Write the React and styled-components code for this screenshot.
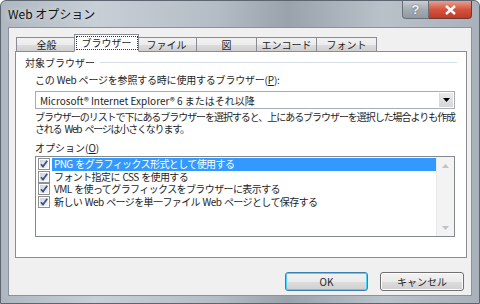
import React, { useState } from "react";
import styled, { createGlobalStyle } from "styled-components";

const tabs = ["全般", "ブラウザー", "ファイル", "図", "エンコード", "フォント"];

const options = [
  "PNG をグラフィックス形式として使用する",
  "フォント指定に CSS を使用する",
  "VML を使ってグラフィックスをブラウザーに表示する",
  "新しい Web ページを単一ファイル Web ページとして保存する",
];

const GlobalStyle = createGlobalStyle`
  body {
    margin: 0;
    font-family: "Noto Sans CJK JP", "Noto Sans", sans-serif;
    font-size: 10px;
    color: #1e1e1e;
  }
`;

const CheckMark = () => (
  <svg width="12" height="12" viewBox="0 0 12 12">
    <defs>
      <linearGradient id="cbg" x1="0" y1="0" x2="1" y2="1">
        <stop offset="0" stopColor="#cfd3da" />
        <stop offset="1" stopColor="#f6f6f6" />
      </linearGradient>
    </defs>
    <rect x="0.5" y="0.5" width="11" height="11" fill="#fff" stroke="#8e8f8f" />
    <rect x="2" y="2" width="8" height="8" fill="url(#cbg)" />
    <path d="M3 6.2 L5 8.6 L9.2 2.8" fill="none" stroke="#3b4f8c" strokeWidth="1.7" />
  </svg>
);

const App = () => {
  const [active, setActive] = useState(1);
  const [selected, setSelected] = useState(0);

  return (
    <>
      <GlobalStyle />
      <Window>
        <TitleBar>
          <Title>Web オプション</Title>
          <Caption>
            <HelpButton>?</HelpButton>
            <CloseButton>
              <svg width="11" height="10" viewBox="0 0 11 10">
                <path d="M1 1 L10 9 M10 1 L1 9" stroke="#fff" strokeWidth="2.4" />
              </svg>
            </CloseButton>
          </Caption>
        </TitleBar>
        <Client>
          <TabStrip>
            {tabs.map((t, i) => (
              <Tab key={t} $active={i === active} onClick={() => setActive(i)}>
                {i === active ? <Focus>{t}</Focus> : t}
              </Tab>
            ))}
          </TabStrip>
          <Panel>
            <GroupHead>
              <span>対象ブラウザー</span>
              <GroupLine />
            </GroupHead>
            <Indented>
              <Label>
                この Web ページを参照する時に使用するブラウザー(<U>P</U>):
              </Label>
              <Select>
                <SelectText>Microsoft® Internet Explorer® 6 またはそれ以降</SelectText>
                <DropButton>
                  <svg width="7" height="4" viewBox="0 0 7 4">
                    <path d="M0 0 H7 L3.5 4 Z" fill="#000" />
                  </svg>
                </DropButton>
              </Select>
              <Description>
                <Line $spacing={-1.05}>
                  ブラウザーのリストで下にあるブラウザーを選択すると、上にあるブラウザーを選択した場合よりも作成
                </Line>
                <Line $spacing={-1.2}>される Web ページは小さくなります。</Line>
              </Description>
              <OptionsLabel>
                オプション(<U>O</U>)
              </OptionsLabel>
              <ListBox>
                <Items>
                  {options.map((o, i) => (
                    <Item key={o} onClick={() => setSelected(i)}>
                      <CheckMark />
                      <ItemText $selected={i === selected}>{o}</ItemText>
                    </Item>
                  ))}
                </Items>
                <ScrollBar>
                  <Arrow>
                    <svg width="7" height="4" viewBox="0 0 7 4">
                      <path d="M0 4 H7 L3.5 0 Z" fill="#c2c2c2" />
                    </svg>
                  </Arrow>
                  <Arrow>
                    <svg width="7" height="4" viewBox="0 0 7 4">
                      <path d="M0 0 H7 L3.5 4 Z" fill="#c2c2c2" />
                    </svg>
                  </Arrow>
                </ScrollBar>
              </ListBox>
            </Indented>
          </Panel>
          <Footer>
            <Button $default>OK</Button>
            <Button>キャンセル</Button>
          </Footer>
        </Client>
      </Window>
    </>
  );
};

export default App;

const Window = styled.div`
  width: 480px;
  height: 304px;
  box-sizing: border-box;
  padding: 0 7px 7px 7px;
  display: flex;
  flex-direction: column;
  background: linear-gradient(90deg, #aeb7c0 0%, #c8cfd6 20%, #b4bcc5 45%, #9aa3ac 60%, #b9c1c9 80%, #a9b2bb 100%);
  border: 1px solid #5d6670;
  border-radius: 6px 6px 0 0;
`;

const TitleBar = styled.div`
  height: 26px;
  display: flex;
  align-items: flex-start;
  justify-content: space-between;
`;

const Title = styled.div`
  font-size: 12px;
  color: #111;
  padding-top: 4px;
  text-shadow: 0 0 6px #e8ecf0;
`;

const Caption = styled.div`
  display: flex;
`;

const HelpButton = styled.div`
  width: 25px;
  height: 17px;
  display: flex;
  align-items: center;
  justify-content: center;
  font-family: "Liberation Sans", sans-serif;
  font-weight: bold;
  font-size: 13px;
  color: #eef1f4;
  text-shadow: 0 0 2px #555;
  background: linear-gradient(#c9ced3, #a5abb2 50%, #9299a1);
  border: 1px solid #6b7077;
  border-top: none;
  border-radius: 0 0 0 4px;
`;

const CloseButton = styled.div`
  width: 42px;
  height: 17px;
  display: flex;
  align-items: center;
  justify-content: center;
  background: linear-gradient(#e8a08f, #d4543f 50%, #c23a26);
  border: 1px solid #6b3a33;
  border-top: none;
  border-left: none;
  border-radius: 0 0 4px 0;
`;

const Client = styled.div`
  flex: 1;
  background: #f0f0f0;
  border: 1px solid #8a939c;
  display: flex;
  flex-direction: column;
  padding: 6px 4px 0 6px;
`;

const TabStrip = styled.div`
  display: flex;
  align-items: flex-end;
  height: 18px;
  padding-left: 2px;
  position: relative;
  z-index: 1;
`;

const Tab = styled.div`
  width: ${(p) => (p.$active ? "65px" : "61px")};
  margin: ${(p) => (p.$active ? "0 -2px 0 -3px" : "0 0 0 -1px")};
  height: ${(p) => (p.$active ? "18px" : "15px")};
  box-sizing: border-box;
  display: flex;
  align-items: center;
  justify-content: center;
  border: 1px solid #898c95;
  border-bottom: ${(p) => (p.$active ? "1px solid #fff" : "1px solid #898c95")};
  background: ${(p) => (p.$active ? "#fff" : "linear-gradient(#f3f3f3, #ebebeb 50%, #dddddd 51%, #cfcfcf)")};
  position: relative;
  z-index: ${(p) => (p.$active ? 2 : 1)};
  font-size: 10px;
  cursor: default;
`;

const Focus = styled.span`
  border: 1px dotted #333;
  padding: 0 5px;
  line-height: 12px;
`;

const Panel = styled.div`
  height: 207px;
  box-sizing: border-box;
  background: #fff;
  border: 1px solid #898c95;
  margin-top: -1px;
  padding: 3px 9px 0 9px;
  display: flex;
  flex-direction: column;
`;

const GroupHead = styled.div`
  display: flex;
  align-items: center;
  gap: 5px;
  height: 14px;
`;

const GroupLine = styled.div`
  flex: 1;
  height: 1px;
  background: #d5dfe5;
`;

const Indented = styled.div`
  padding-left: 10px;
  padding-right: 2px;
  display: flex;
  flex-direction: column;
`;

const Label = styled.div`
  margin-top: 4px;
  line-height: 14px;
  white-space: nowrap;
  letter-spacing: -0.2px;
`;

const U = styled.span`
  text-decoration: underline;
`;

const Select = styled.div`
  margin-top: 4px;
  height: 18px;
  box-sizing: border-box;
  border: 1px solid #a5acb5;
  display: flex;
  align-items: center;
  justify-content: space-between;
  padding: 0 1px 0 4px;
`;

const SelectText = styled.span`
  white-space: nowrap;
`;

const DropButton = styled.div`
  width: 14px;
  height: 14px;
  box-sizing: border-box;
  display: flex;
  align-items: center;
  justify-content: center;
  background: linear-gradient(#eaeaea, #d6d6d6);
  border-left: 1px solid #d9d9d9;
`;

const Description = styled.div`
  margin-top: 2px;
  display: flex;
  flex-direction: column;
`;

const Line = styled.div`
  height: 12px;
  line-height: 12px;
  white-space: nowrap;
  letter-spacing: ${(p) => p.$spacing}px;
  word-spacing: 2px;
`;

const OptionsLabel = styled.div`
  margin-top: 6px;
  line-height: 14px;
`;

const ListBox = styled.div`
  margin-top: 1px;
  height: 81px;
  box-sizing: border-box;
  border: 1px solid #828790;
  display: flex;
`;

const Items = styled.div`
  flex: 1;
  padding: 1px 0 0 2px;
  display: flex;
  flex-direction: column;
`;

const Item = styled.div`
  display: flex;
  align-items: center;
  height: 12.5px;
  gap: 2px;
  white-space: nowrap;
`;

const ItemText = styled.span`
  flex: 1;
  height: 12.5px;
  line-height: 12.5px;
  padding-left: 2px;
  letter-spacing: -0.6px;
  word-spacing: 1px;
  background: ${(p) => (p.$selected ? "#3399ff" : "transparent")};
  color: ${(p) => (p.$selected ? "#fff" : "#1e1e1e")};
`;

const ScrollBar = styled.div`
  width: 17px;
  background: #f3f3f3;
  border-left: 1px solid #e8e8e8;
  display: flex;
  flex-direction: column;
  justify-content: space-between;
`;

const Arrow = styled.div`
  height: 17px;
  display: flex;
  align-items: center;
  justify-content: center;
`;

const Footer = styled.div`
  flex: 1;
  display: flex;
  justify-content: flex-end;
  align-items: flex-start;
  gap: 12px;
  padding-top: 14px;
  padding-right: 3px;
`;

const Button = styled.button`
  width: ${(p) => (p.$default ? "83px" : "84px")};
  height: 19px;
  box-sizing: border-box;
  border: 1px solid ${(p) => (p.$default ? "#3c7fb1" : "#707070")};
  border-radius: 3px;
  background: linear-gradient(#f2f2f2, #ebebeb 50%, #dddddd 51%, #cfcfcf);
  box-shadow: ${(p) => (p.$default ? "inset 0 0 0 1px #48d4ff" : "inset 0 0 0 1px #fcfcfc")};
  font-family: "Noto Sans CJK JP", "Noto Sans", sans-serif;
  font-size: 10px;
  color: #1e1e1e;
  padding: 0;
  cursor: pointer;
`;
